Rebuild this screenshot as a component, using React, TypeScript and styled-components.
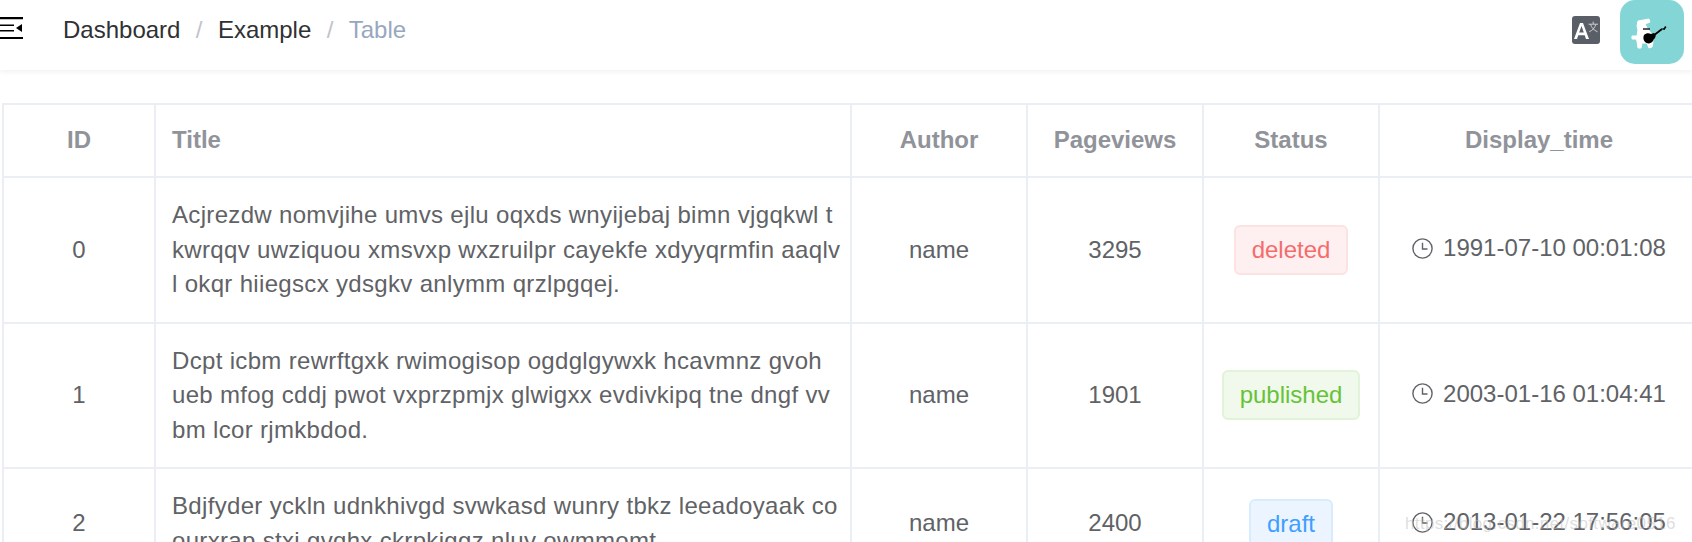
import React from 'react';
import styled, { createGlobalStyle } from 'styled-components';

const GlobalStyle = createGlobalStyle`
  html, body {
    margin: 0;
    padding: 0;
    background: #fff;
    overflow: hidden;
  }
  body {
    font-family: "Liberation Sans", Arial, sans-serif;
  }
`;

const Page = styled.div`
  position: relative;
  width: 1692px;
  height: 542px;
  overflow: hidden;
  background: #fff;
`;

const Navbar = styled.header`
  height: 70px;
  display: flex;
  align-items: flex-start;
  box-shadow: 0 1px 6px rgba(0, 21, 41, 0.08);
`;

const Hamburger = styled.svg`
  display: block;
  width: 23px;
  height: 22px;
  margin-top: 17px;
  flex: none;
`;

const Breadcrumb = styled.nav`
  display: flex;
  align-items: center;
  height: 60px;
  margin-left: 40px;
  font-size: 24px;
  color: #303133;
`;

const Crumb = styled.span<{ $current?: boolean }>`
  color: ${props => (props.$current ? '#97a8be' : '#303133')};
`;

const Separator = styled.span`
  margin: 0 15.4px;
  color: #c0c4cc;
`;

const RightMenu = styled.div`
  margin-left: auto;
  display: flex;
  align-items: flex-start;
  padding-right: 8px;
`;

const TranslateIcon = styled.svg`
  display: block;
  width: 28px;
  height: 28px;
  margin-top: 16px;
  margin-right: 20px;
`;

const Avatar = styled.svg`
  display: block;
  width: 64px;
  height: 64px;
  border-radius: 15px;
`;

const Content = styled.main`
  padding: 33px 0 0 2px;
`;

const Table = styled.table`
  border-collapse: collapse;
  table-layout: fixed;
  width: 1696px;
  font-size: 24px;
  line-height: 34.5px;
  color: #606266;
`;

const HeadCell = styled.th<{ $left?: boolean }>`
  height: 71px;
  padding: 0 16px;
  border: 2px solid #ebeef5;
  text-align: ${props => (props.$left ? 'left' : 'center')};
  font-weight: 700;
  color: #909399;
`;

const Cell = styled.td<{ $left?: boolean }>`
  padding: 20px 16px;
  border: 2px solid #ebeef5;
  text-align: ${props => (props.$left ? 'left' : 'center')};
  vertical-align: middle;
`;

const TitleText = styled.div`
  letter-spacing: 0.33px;
  margin-right: -8px;
`;

const statusColors = {
  deleted: { color: '#f56c6c', bg: '#fef0f0', border: '#fde2e2' },
  published: { color: '#67c23a', bg: '#f0f9eb', border: '#e1f3d8' },
  draft: { color: '#409eff', bg: '#ecf5ff', border: '#d9ecff' },
};

type Status = keyof typeof statusColors;

const Tag = styled.span<{ $status: Status }>`
  display: block;
  width: fit-content;
  margin: 0 auto;
  height: 50px;
  line-height: 46px;
  padding: 0 16px;
  box-sizing: border-box;
  border-radius: 6px;
  border: 2px solid ${props => statusColors[props.$status].border};
  background: ${props => statusColors[props.$status].bg};
  color: ${props => statusColors[props.$status].color};
`;

const TimeWrap = styled.span`
  display: inline-flex;
  align-items: center;
  gap: 10px;
  white-space: nowrap;
`;

const ClockIcon = styled.svg`
  width: 21px;
  height: 21px;
  flex: none;
`;

const Watermark = styled.div`
  position: absolute;
  left: 1405px;
  top: 514px;
  font-size: 17px;
  line-height: 20px;
  letter-spacing: 0.35px;
  color: rgba(190, 190, 190, 0.5);
  white-space: nowrap;
`;

const rows: { id: number; title: string; pageviews: number; status: Status; time: string }[] = [
  {
    id: 0,
    title:
      'Acjrezdw nomvjihe umvs ejlu oqxds wnyijebaj bimn vjgqkwl t kwrqqv uwziquou xmsvxp wxzruilpr cayekfe xdyyqrmfin aaqlv l okqr hiiegscx ydsgkv anlymm qrzlpgqej.',
    pageviews: 3295,
    status: 'deleted',
    time: '1991-07-10 00:01:08',
  },
  {
    id: 1,
    title:
      'Dcpt icbm rewrftgxk rwimogisop ogdglgywxk hcavmnz gvoh ueb mfog cddj pwot vxprzpmjx glwigxx evdivkipq tne dngf vv bm lcor rjmkbdod.',
    pageviews: 1901,
    status: 'published',
    time: '2003-01-16 01:04:41',
  },
  {
    id: 2,
    title:
      'Bdjfyder yckln udnkhivgd svwkasd wunry tbkz leeadoyaak co ourxrap stxi gvqhx ckrpkiggz nluy owmmomt.',
    pageviews: 2400,
    status: 'draft',
    time: '2013-01-22 17:56:05',
  },
];

const Clock = () => (
  <ClockIcon viewBox="0 0 21 21" fill="none" stroke="#606266" strokeWidth="1.4">
    <circle cx="10.5" cy="10.5" r="9.6" />
    <path d="M10.5 4.8v6.2h5" />
  </ClockIcon>
);

export default function App() {
  return (
    <Page>
      <GlobalStyle />
      <Navbar>
        <Hamburger viewBox="0 0 23 22">
          <path d="M0 0h23v2.2H0zM0 7.4h14v1.6H0zM0 13h14v1.6H0zM0 20h23v2H0z" fill="#000" />
          <path d="M22 7v8l-6-4z" fill="#000" />
        </Hamburger>
        <Breadcrumb>
          <Crumb>Dashboard</Crumb>
          <Separator>/</Separator>
          <Crumb>Example</Crumb>
          <Separator>/</Separator>
          <Crumb $current>Table</Crumb>
        </Breadcrumb>
        <RightMenu>
          <TranslateIcon viewBox="0 0 28 28">
            <rect width="28" height="28" rx="3" fill="#5a5e66" />
            <path d="M2 23L8 7h3l6 16h-3l-1.3-3.8H6.3L5 23zM7.2 16.6h4.6L9.5 10z" fill="#fff" />
            <path d="M16.5 8.2h9.5M21.2 5.6v2.6M18.6 8.2c.8 3.4 3.2 6 7 7.6M23.8 8.2c-.8 3.4-3 6-6.6 7.6" stroke="#e4e4e6" strokeWidth="0.8" fill="none" />
          </TranslateIcon>
          <Avatar viewBox="0 0 64 64">
            <rect width="64" height="64" fill="#84d6d6" />
            <path
              d="M18 21l11-2 1 3-5 2 2 4 4 5 2 9-1 5-3 1-2-5h-5l-1 5h-3l-1-7-1-2h-4v-3h5l1-6-1-4z"
              fill="#fff"
              stroke="#fff"
              strokeLinejoin="round"
            />
            <path d="M23 29h7" stroke="#222" strokeWidth="1.6" />
            <path d="M24 35c2-2 5-2 7-1l3-1c2 1 2 3 1 5-1 1-2 2-2 3-2 3-6 3-8 1-2-2-2-5-1-7z" fill="#000" />
            <path d="M33 36l9-7" stroke="#000" strokeWidth="1.8" />
            <path d="M41 29l3-1 1-2 1.5 1-2 3z" fill="#000" />
          </Avatar>
        </RightMenu>
      </Navbar>
      <Content>
        <Table>
          <colgroup>
            <col width={152} />
            <col width={696} />
            <col width={176} />
            <col width={176} />
            <col width={176} />
            <col width={320} />
          </colgroup>
          <thead>
            <tr>
              <HeadCell>ID</HeadCell>
              <HeadCell $left>Title</HeadCell>
              <HeadCell>Author</HeadCell>
              <HeadCell>Pageviews</HeadCell>
              <HeadCell>Status</HeadCell>
              <HeadCell>Display_time</HeadCell>
            </tr>
          </thead>
          <tbody>
            {rows.map(row => (
              <tr key={row.id}>
                <Cell>{row.id}</Cell>
                <Cell $left>
                  <TitleText>{row.title}</TitleText>
                </Cell>
                <Cell>name</Cell>
                <Cell>{row.pageviews}</Cell>
                <Cell>
                  <Tag $status={row.status}>{row.status}</Tag>
                </Cell>
                <Cell>
                  <TimeWrap>
                    <Clock />
                    {row.time}
                  </TimeWrap>
                </Cell>
              </tr>
            ))}
          </tbody>
        </Table>
      </Content>
      <Watermark>https://blog.csdn.net/software0516</Watermark>
    </Page>
  );
}
